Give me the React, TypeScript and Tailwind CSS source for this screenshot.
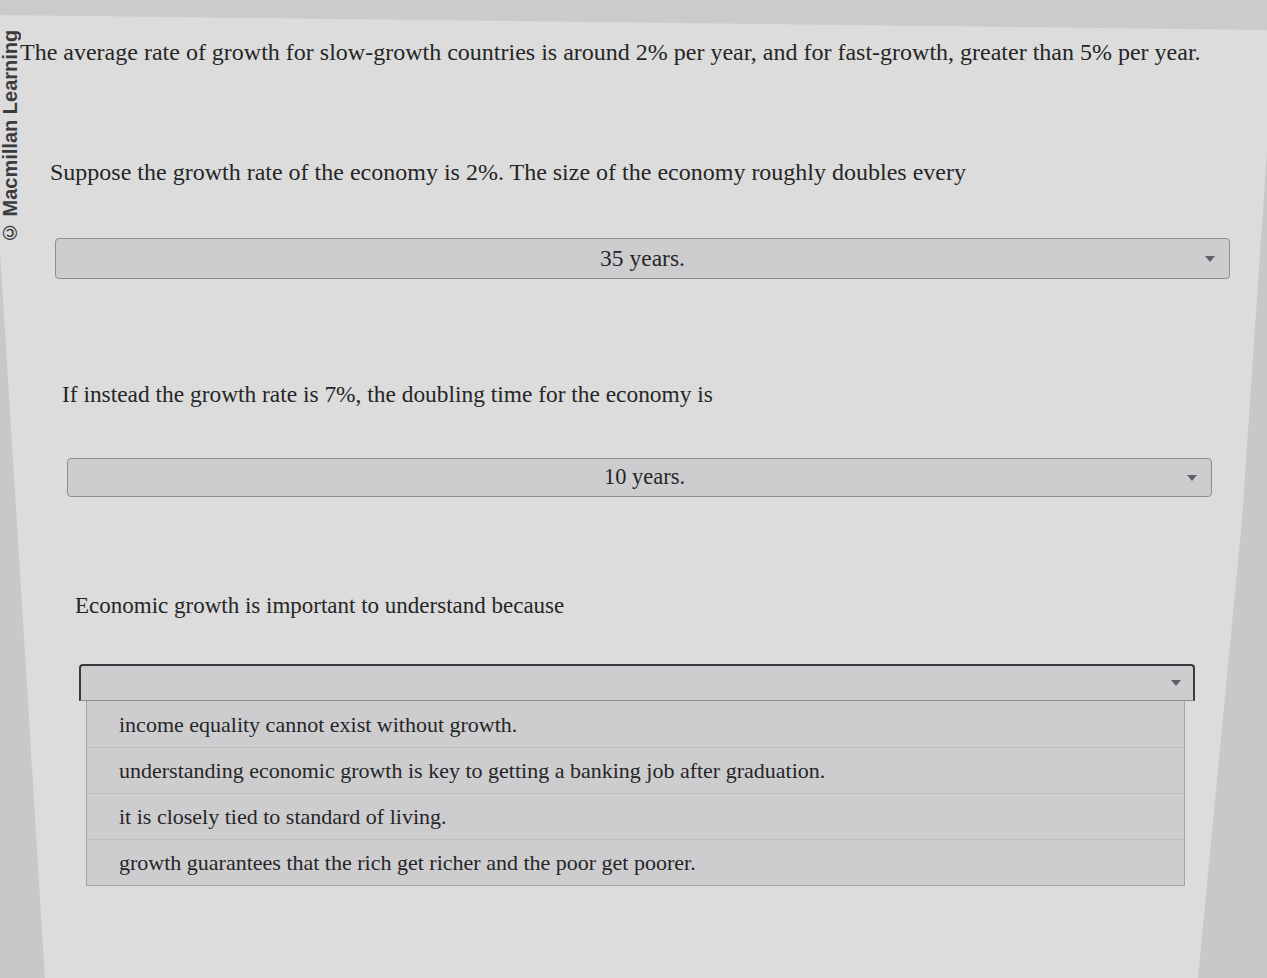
import React from "react";

function Caret() {
  return (
    <svg width="10" height="6" viewBox="0 0 10 6" className="shrink-0">
      <polygon points="0,0 10,0 5,6" fill="#5f5f63" />
    </svg>
  );
}

const serif = { fontFamily: '"Liberation Serif", "Times New Roman", serif' };

export default function App() {
  const options = [
    "income equality cannot exist without growth.",
    "understanding economic growth is key to getting a banking job after graduation.",
    "it is closely tied to standard of living.",
    "growth guarantees that the rich get richer and the poor get poorer.",
  ];
  return (
    <div
      className="relative w-[1267px] h-[978px] overflow-hidden bg-[#dcdcdc] text-[#262626]"
      style={serif}
    >
      {/* photo framing: darker bezel wedges */}
      <svg
        className="absolute inset-0 pointer-events-none"
        width="1267"
        height="978"
        viewBox="0 0 1267 978"
      >
        <polygon points="0,0 1267,0 1267,30 0,15" fill="#cbcbcd" />
        <polygon points="1267,150 1267,978 1198,978 1242,520" fill="#c8c8ca" />
        <polygon points="0,250 45,978 0,978" fill="#c8c8ca" />
      </svg>

      {/* watermark */}
      <div
        className="absolute left-0 top-[40px] h-[204px] w-[20px] leading-none text-[20px] font-semibold text-[#3c3c3e] whitespace-nowrap rotate-180 [writing-mode:vertical-rl]"
        style={{ fontFamily: '"Liberation Sans", Arial, sans-serif' }}
      >
        © Macmillan Learning
      </div>

      <div className="relative flex flex-col">
        <p className="ml-[20px] mt-[36px] text-[24px] leading-[32px] whitespace-nowrap">
          The average rate of growth for slow-growth countries is around 2% per year, and for fast-growth, greater than 5% per year.
        </p>

        <p className="ml-[50px] mt-[88px] text-[24px] leading-[32px] whitespace-nowrap">
          Suppose the growth rate of the economy is 2%. The size of the economy roughly doubles every
        </p>

        <div className="ml-[55px] mt-[50px] w-[1175px] h-[41px] rounded-[4px] border border-[#8e8e92] bg-[#cdcdd0] flex items-center pr-[14px]">
          <span className="flex-1 text-center text-[23.5px] leading-none pl-[24px]">35 years.</span>
          <Caret />
        </div>

        <p className="ml-[62px] mt-[99px] text-[23.4px] leading-[32px] whitespace-nowrap">
          If instead the growth rate is 7%, the doubling time for the economy is
        </p>

        <div className="ml-[67px] mt-[48px] w-[1145px] h-[39px] rounded-[4px] border border-[#8e8e92] bg-[#cdcdd0] flex items-center pr-[14px]">
          <span className="flex-1 text-center text-[22.5px] leading-none pl-[34px]">10 years.</span>
          <Caret />
        </div>

        <p className="ml-[75px] mt-[93px] text-[23px] leading-[32px] whitespace-nowrap">
          Economic growth is important to understand because
        </p>

        <div className="ml-[79px] mt-[42px] w-[1116px] flex flex-col">
          <div className="h-[37px] rounded-t-[4px] border-t-2 border-x-2 border-[#3a3a3e] border-b border-b-[#8e8e92] bg-[#cdcdd0] flex items-center justify-end pr-[12px]">
            <Caret />
          </div>
          <div className="ml-[7px] mr-[10px] border-x border-b border-[#a4a4a8] bg-[#cdcdd0] flex flex-col">
            {options.map((o, i) => (
              <div
                key={i}
                className={`h-[46px] flex items-center pl-[32px] text-[22px] whitespace-nowrap ${
                  i > 0 ? "border-t border-[#bcbcc0]" : ""
                }`}
              >
                {o}
              </div>
            ))}
          </div>
        </div>
      </div>
    </div>
  );
}
